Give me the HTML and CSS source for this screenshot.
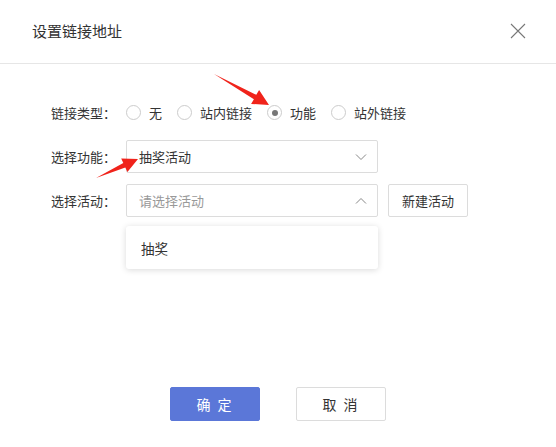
FILE: index.html
```html
<!DOCTYPE html>
<html lang="zh-CN">
<head>
    <meta charset="UTF-8">
    <meta name="viewport" content="width=device-width, initial-scale=1.0">
    <title>设置链接地址</title>
    <link rel="stylesheet" href="styles.css">
</head>
<body>
    <div class="dialog">
        <div class="dialog-header">
            <span class="dialog-title">设置链接地址</span>
            <svg class="close" width="16" height="16" viewBox="0 0 16 16">
                <path d="M1 1L15 15M15 1L1 15" stroke="#777" stroke-width="1.1" fill="none"/>
            </svg>
        </div>
        <div class="dialog-body">
            <div class="form-row">
                <label class="form-label">链接类型：</label>
                <div class="radio-group">
                    <span class="radio"><i class="circle"></i>无</span>
                    <span class="radio"><i class="circle"></i>站内链接</span>
                    <span class="radio"><i class="circle checked"></i>功能</span>
                    <span class="radio"><i class="circle"></i>站外链接</span>
                </div>
            </div>
            <div class="form-row">
                <label class="form-label">选择功能：</label>
                <div class="select">
                    <span class="select-value">抽奖活动</span>
                    <svg class="chevron" width="12" height="8" viewBox="0 0 12 8">
                        <path d="M1 1.5L6 6.5L11 1.5" stroke="#888" stroke-width="1" fill="none"/>
                    </svg>
                </div>
            </div>
            <div class="form-row">
                <label class="form-label">选择活动：</label>
                <div class="select open">
                    <span class="select-placeholder">请选择活动</span>
                    <svg class="chevron" width="12" height="8" viewBox="0 0 12 8">
                        <path d="M1 6.5L6 1.5L11 6.5" stroke="#888" stroke-width="1" fill="none"/>
                    </svg>
                    <div class="dropdown">
                        <div class="dropdown-item">抽奖</div>
                    </div>
                </div>
                <button class="btn btn-small">新建活动</button>
            </div>
        </div>
        <div class="dialog-footer">
            <button class="btn btn-primary">确 定</button>
            <button class="btn btn-default">取 消</button>
        </div>

        <!-- annotation arrows -->
        <svg class="arrows" width="556" height="447" viewBox="0 0 556 447">
            <path d="M214 74 L256.3 94.8 L259.1 90.1 L269 105 L251.1 103.9 L253.9 99.2 Z" fill="#f0231b"/>
            <path d="M96 178 L123.3 162.9 L121.2 158.4 L138 159 L127.4 172 L125.3 167.5 Z" fill="#f0231b"/>
        </svg>
    </div>
</body>
</html>
```

FILE: styles.css
```css
* {
    box-sizing: border-box;
}
body {
    margin: 0;
    padding: 0;
    background-color: #fff;
    font-family: "Microsoft YaHei", "Noto Sans CJK SC", "Noto Sans", sans-serif;
    color: #333;
}
.dialog {
    position: relative;
    width: 556px;
    height: 447px;
    background-color: #fff;
}
.dialog-header {
    height: 64px;
    padding: 0 30px 0 32px;
    display: flex;
    align-items: center;
    justify-content: space-between;
    border-bottom: 1px solid #e6e6e6;
}
.dialog-title {
    font-size: 15px;
    color: #333;
    margin-top: -2px;
}
.close {
    margin-top: -2px;
}
.dialog-body {
    padding: 32px 0 0 51px;
    height: 323px;
    display: flex;
    flex-direction: column;
    gap: 11px;
}
.form-row {
    display: flex;
    align-items: center;
    height: 33px;
    font-size: 13px;
}
.form-label {
    width: 75px;
    color: #333;
}
.radio-group {
    display: flex;
    align-items: center;
    gap: 15px;
}
.radio {
    display: flex;
    align-items: center;
    gap: 8px;
}
.circle {
    width: 15px;
    height: 15px;
    border: 1px solid #ccc;
    border-radius: 50%;
    display: flex;
    align-items: center;
    justify-content: center;
}
.circle.checked::after {
    content: "";
    width: 6px;
    height: 6px;
    border-radius: 50%;
    background-color: #777;
}
.select {
    position: relative;
    width: 252px;
    height: 33px;
    border: 1px solid #dcdcdc;
    border-radius: 2px;
    display: flex;
    align-items: center;
    justify-content: space-between;
    padding: 0 10px 0 12px;
}
.select-value {
    color: #333;
}
.select-placeholder {
    color: #999;
}
.dropdown {
    position: absolute;
    left: -1px;
    top: 41px;
    width: 252px;
    height: 43px;
    background-color: #fff;
    border-radius: 3px;
    box-shadow: 0 1px 6px rgba(0, 0, 0, 0.15);
    display: flex;
    align-items: center;
    z-index: 2;
}
.dropdown-item {
    padding-left: 15px;
    font-size: 13.5px;
    color: #333;
}
.btn {
    font-family: inherit;
    font-size: 13px;
    border-radius: 2px;
    cursor: pointer;
}
.btn-small {
    margin-left: 10px;
    width: 80px;
    height: 33px;
    background-color: #fff;
    border: 1px solid #dcdcdc;
    color: #333;
}
.dialog-footer {
    display: flex;
    justify-content: center;
    gap: 36px;
}
.btn-primary,
.btn-default {
    width: 90px;
    height: 34px;
    font-size: 14px;
    letter-spacing: 2px;
}
.btn-primary {
    background-color: #5b77d8;
    border: 1px solid #5b77d8;
    color: #fff;
}
.btn-default {
    background-color: #fff;
    border: 1px solid #dcdcdc;
    color: #333;
}
.arrows {
    position: absolute;
    left: 0;
    top: 0;
    pointer-events: none;
}
```
